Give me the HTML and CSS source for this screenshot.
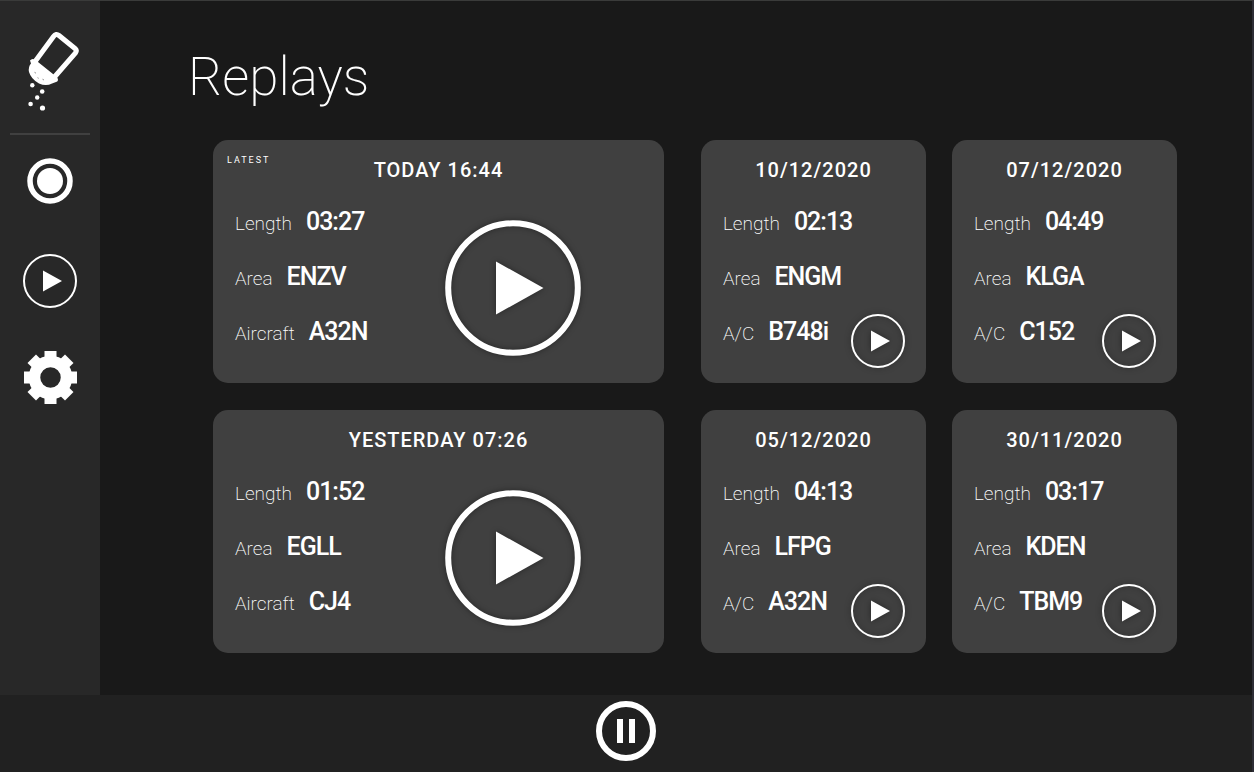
FILE: index.html
```html
<!DOCTYPE html>
<html lang="en">
<head>
  <meta charset="UTF-8">
  <meta name="viewport" content="width=device-width, initial-scale=1.0">
  <title>Replays</title>
  <link rel="stylesheet" href="styles.css">
</head>
<body>
  <!-- shared play icons -->
  <svg class="defs" width="0" height="0" aria-hidden="true">
    <symbol id="play-small" viewBox="0 0 54 54">
      <circle cx="27" cy="27" r="26" fill="none" stroke="#fff" stroke-width="2"/>
      <path d="M20 16.5L39 27L20 37.5Z" fill="#fff"/>
    </symbol>
    <symbol id="play-large" viewBox="0 0 136 136">
      <circle cx="68" cy="68" r="64.8" fill="none" stroke="#fff" stroke-width="6"/>
      <path d="M51 41.5L98.500 68L51 94.500Z" fill="#fff"/>
    </symbol>
  </svg>

  <div class="app">
    <nav class="sidebar">
      <a class="logo" href="#" aria-label="Home">
        <svg width="60" height="84" viewBox="22 28 60 84">
          <path d="M34 63L53.500 36.500Q56 33 59 35.500L75 48.500Q77.500 50.500 75.500 53L54.500 77" fill="none" stroke="#fff" stroke-width="5"/>
          <path d="M30 60.500Q32 58 34.500 59.500L38 62L53 74L57.500 78Q59 81 56 82L52 83.500Q46 86.500 39 83.500Q31 79 29 72Q28 67 31 63.500Z" fill="#fff"/>
          <path d="M34.500 72.300L36 73.200M37.500 77.700L38.700 78.300M42.500 79.200L44 80" stroke="#777" stroke-width="0.800"/>
          <g fill="#fff">
            <circle cx="32.300" cy="85.300" r="2.200"/>
            <circle cx="42.200" cy="91.500" r="2.300"/>
            <circle cx="37.200" cy="97.500" r="2.200"/>
            <circle cx="30.600" cy="104" r="2.300"/>
            <circle cx="42.500" cy="108" r="2.600"/>
          </g>
        </svg>
      </a>
      <button type="button" class="record" aria-label="Record">
        <svg width="46" height="46" viewBox="0 0 46 46">
          <circle cx="23" cy="23" r="20" fill="none" stroke="#fff" stroke-width="5.500"/>
          <circle cx="23" cy="23" r="13" fill="#fff"/>
        </svg>
      </button>
      <button type="button" class="replays" aria-label="Replays">
        <svg width="54" height="54"><use href="#play-small"/></svg>
      </button>
      <button type="button" class="settings" aria-label="Settings">
        <svg width="54" height="54" viewBox="-27.500 -27.500 54 54">
          <circle r="16" fill="none" stroke="#fff" stroke-width="11.500"/>
          <g id="teeth" fill="#fff">
            <rect x="-6" y="-26.500" width="12" height="10"/>
            <rect x="-6" y="16.500" width="12" height="10"/>
            <rect x="-26.500" y="-6" width="10" height="12"/>
            <rect x="16.500" y="-6" width="10" height="12"/>
          </g>
          <use href="#teeth" transform="rotate(45)"/>
        </svg>
      </button>
    </nav>

    <main>
      <h1>Replays</h1>
      <div class="replay-list">
        <div class="column">
          <section class="card wide">
            <span class="badge">LATEST</span>
            <h2>TODAY 16:44</h2>
            <div class="card-body">
              <dl>
                <div><dt>Length</dt><dd>03:27</dd></div>
                <div><dt>Area</dt><dd>ENZV</dd></div>
                <div><dt>Aircraft</dt><dd>A32N</dd></div>
              </dl>
              <button type="button" class="play" aria-label="Play"><svg width="136" height="136"><use href="#play-large"/></svg></button>
            </div>
          </section>
          <section class="card wide">
            <h2>YESTERDAY 07:26</h2>
            <div class="card-body">
              <dl>
                <div><dt>Length</dt><dd>01:52</dd></div>
                <div><dt>Area</dt><dd>EGLL</dd></div>
                <div><dt>Aircraft</dt><dd>CJ4</dd></div>
              </dl>
              <button type="button" class="play" aria-label="Play"><svg width="136" height="136"><use href="#play-large"/></svg></button>
            </div>
          </section>
        </div>

        <div class="column older">
          <section class="card">
            <h2>10/12/2020</h2>
            <div class="card-body">
              <dl>
                <div><dt>Length</dt><dd>02:13</dd></div>
                <div><dt>Area</dt><dd>ENGM</dd></div>
                <div><dt>A/C</dt><dd>B748i</dd></div>
              </dl>
              <button type="button" class="play" aria-label="Play"><svg width="54" height="54"><use href="#play-small"/></svg></button>
            </div>
          </section>
          <section class="card">
            <h2>07/12/2020</h2>
            <div class="card-body">
              <dl>
                <div><dt>Length</dt><dd>04:49</dd></div>
                <div><dt>Area</dt><dd>KLGA</dd></div>
                <div><dt>A/C</dt><dd>C152</dd></div>
              </dl>
              <button type="button" class="play" aria-label="Play"><svg width="54" height="54"><use href="#play-small"/></svg></button>
            </div>
          </section>
          <section class="card">
            <h2>05/12/2020</h2>
            <div class="card-body">
              <dl>
                <div><dt>Length</dt><dd>04:13</dd></div>
                <div><dt>Area</dt><dd>LFPG</dd></div>
                <div><dt>A/C</dt><dd>A32N</dd></div>
              </dl>
              <button type="button" class="play" aria-label="Play"><svg width="54" height="54"><use href="#play-small"/></svg></button>
            </div>
          </section>
          <section class="card">
            <h2>30/11/2020</h2>
            <div class="card-body">
              <dl>
                <div><dt>Length</dt><dd>03:17</dd></div>
                <div><dt>Area</dt><dd>KDEN</dd></div>
                <div><dt>A/C</dt><dd>TBM9</dd></div>
              </dl>
              <button type="button" class="play" aria-label="Play"><svg width="54" height="54"><use href="#play-small"/></svg></button>
            </div>
          </section>
        </div>
      </div>
    </main>
  </div>

  <footer>
    <button type="button" aria-label="Pause">
      <svg width="60" height="60" viewBox="0 0 60 60">
        <circle cx="30" cy="30" r="27" fill="none" stroke="#fff" stroke-width="6"/>
        <path d="M21 18h6v24h-6zM33 18h6v24h-6z" fill="#fff"/>
      </svg>
    </button>
  </footer>
</body>
</html>
```
FILE: styles.css
```css
* {
  box-sizing: border-box;
}
body {
  display: flex;
  flex-direction: column;
  min-height: 100vh;
  margin: 0;
  border-top: 1px solid #3a3b3a;
  border-right: 2px solid #2e2e36;
  background-color: #191919;
  color: #fff;
  font-family: Roboto, sans-serif;
}
h1, h2, dl, dd {
  margin: 0;
}
button {
  padding: 0;
  border: none;
  background: none;
  cursor: pointer;
}
svg {
  display: block;
}
.defs {
  position: absolute;
}
.app {
  display: flex;
  flex: 1;
}

/* sidebar */
.sidebar {
  display: flex;
  flex-direction: column;
  align-items: center;
  width: 100px;
  padding: 27px 10px;
  background-color: #282828;
}
.logo {
  display: flex;
  justify-content: center;
  width: 100%;
  padding-bottom: 21px;
  border-bottom: 2px solid #404040;
}
.logo svg {
  margin-left: 4px;
}
.record {
  margin-top: 23px;
}
.replays {
  margin-top: 50px;
}
.settings {
  margin-top: 42px;
}

/* replays */
main {
  flex: 1;
  padding: 44px 75px 42px 88px;
}
h1 {
  margin-bottom: 31px;
  font-size: 53px;
  font-weight: 200;
  line-height: 64px;
}
.replay-list {
  display: grid;
  grid-template-columns: 18fr 19fr;
  gap: 37px;
  margin-left: 25px;
}
.column {
  display: grid;
  gap: 27px;
}
.older {
  grid-template-columns: 1fr 1fr;
  column-gap: 26px;
}
.card {
  position: relative;
  padding-top: 15px;
  border-radius: 15px;
  background-color: #404040;
}
.badge {
  position: absolute;
  top: 15px;
  left: 14px;
  font-size: 9px;
  line-height: 10px;
  letter-spacing: 2px;
}
h2 {
  font-size: 20px;
  font-weight: 500;
  line-height: 30px;
  letter-spacing: 1px;
  text-align: center;
}
.card-body {
  display: flex;
  justify-content: space-between;
  align-items: flex-end;
  padding: 9px 21px 15px 22px;
}
.wide .card-body {
  padding-right: 83px;
}
dl {
  margin-bottom: 9px;
}
dl div {
  display: flex;
  align-items: baseline;
  gap: 14px;
  height: 55px;
  line-height: 55px;
  white-space: nowrap;
}
dt {
  font-size: 19px;
  font-weight: 200;
}
dd {
  font-size: 25px;
  font-weight: 500;
  letter-spacing: -1px;
}
.play {
  filter: drop-shadow(0 0 3px rgba(0, 0, 0, 0.4));
}
.wide .play {
  margin-bottom: 12px;
}
.card:not(.wide) dl {
  width: 128px;
}

/* player bar */
footer {
  display: flex;
  justify-content: center;
  padding: 6px 0 11px;
  background-color: #212121;
}
```
